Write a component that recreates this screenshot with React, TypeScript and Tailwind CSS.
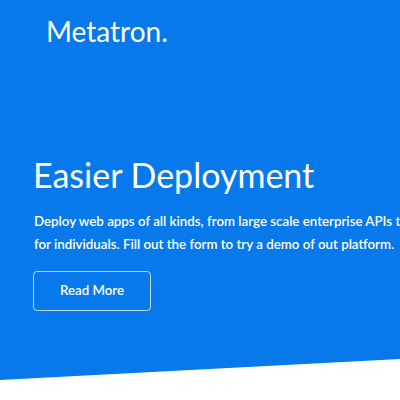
export default function App() {
  return (
    <div className="relative w-[400px] h-[400px] overflow-hidden bg-white" style={{ fontFamily: "Lato, 'Open Sans', sans-serif" }}>
      <div className="absolute inset-x-0 top-0 h-[400px] bg-[#0779ea] [clip-path:polygon(0_0,100%_0,100%_359px,0_380px)]" />
      <div className="relative flex flex-col">
        <div className="pl-[46px] pt-[13px] text-[28px] leading-[36px] text-white">Metatron.</div>
        <h1 className="pl-[33px] mt-[105px] text-[34px] leading-[42px] text-white">Easier Deployment</h1>
        <p className="pl-[34px] mt-[14px] text-[13.3px] leading-[23px] font-semibold text-white whitespace-nowrap">
          Deploy web apps of all kinds, from large scale enterprise APIs to static sites
          <br />
          for individuals. Fill out the form to try a demo of out platform.
        </p>
        <div className="pl-[33px] mt-[15px]">
          <button className="w-[118px] h-[40px] rounded-[4px] border border-white/70 text-white text-[13.3px] font-semibold">
            Read More
          </button>
        </div>
      </div>
    </div>
  );
}
